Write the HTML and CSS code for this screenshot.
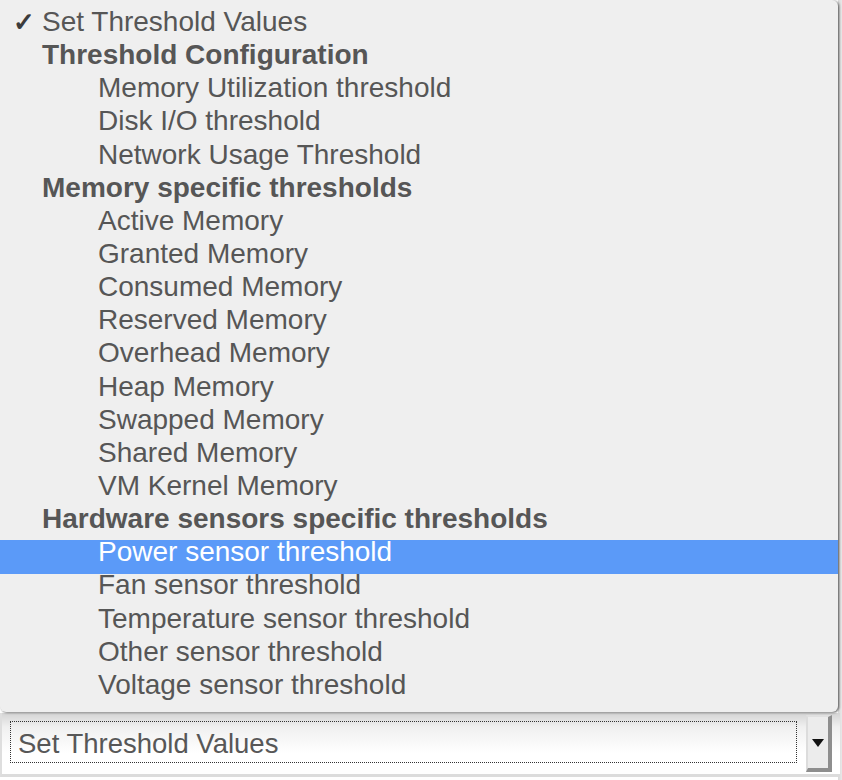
FILE: index.html
```html
<!DOCTYPE html>
<html>
<head>
<meta charset="utf-8">
<link rel="stylesheet" href="styles.css">
</head>
<body>
<div class="page">
  <div class="menu">
    <div class="row check"><span class="mark">✓</span>Set Threshold Values</div>
    <div class="row group">Threshold Configuration</div>
    <div class="row item">Memory Utilization threshold</div>
    <div class="row item">Disk I/O threshold</div>
    <div class="row item">Network Usage Threshold</div>
    <div class="row group">Memory specific thresholds</div>
    <div class="row item">Active Memory</div>
    <div class="row item">Granted Memory</div>
    <div class="row item">Consumed Memory</div>
    <div class="row item">Reserved Memory</div>
    <div class="row item">Overhead Memory</div>
    <div class="row item">Heap Memory</div>
    <div class="row item">Swapped Memory</div>
    <div class="row item">Shared Memory</div>
    <div class="row item">VM Kernel Memory</div>
    <div class="row group">Hardware sensors specific thresholds</div>
    <div class="row item active">Power sensor threshold</div>
    <div class="row item">Fan sensor threshold</div>
    <div class="row item">Temperature sensor threshold</div>
    <div class="row item">Other sensor threshold</div>
    <div class="row item">Voltage sensor threshold</div>
  </div>
  <div class="select">
    <div class="field"><span class="value">Set Threshold Values</span></div>
    <div class="button"><span class="arrow"></span></div>
  </div>
</div>
</body>
</html>
```
FILE: styles.css
```css
html, body {
  margin: 0;
  padding: 0;
  background: #ffffff;
}
.page {
  width: 842px;
  height: 780px;
  position: relative;
  overflow: hidden;
  font-family: "Helvetica Neue", "Liberation Sans", Arial, sans-serif;
  background: linear-gradient(to right, #fff 0, #fff 838px, #d8d8d8 838px, #e8e8e8 842px);
}
.menu {
  position: relative;
  z-index: 2;
  width: 838px;
  height: 712px;
  padding-top: 5px;
  box-sizing: border-box;
  background: #efefef;
  border-radius: 0 6px 6px 6px;
  box-shadow: 1px 1px 2px rgba(0,0,0,0.45), 2px 0 2px rgba(0,0,0,0.15);
  color: #565656;
  font-size: 28px;
}
.row {
  height: 33.15px;
  line-height: 33px;
  white-space: nowrap;
}
.check {
  padding-left: 13px;
}
.mark {
  display: inline-block;
  width: 29px;
  font-size: 26px;
  font-weight: bold;
  color: #3c3c3c;
}
.group {
  padding-left: 42px;
  font-weight: bold;
}
.item {
  padding-left: 98px;
}
.active {
  background: linear-gradient(to bottom, transparent 5px, #5b9af8 5px);
  box-shadow: 0 6px 0 #5b9af8;
  color: #ffffff;
}
.select {
  display: flex;
  height: 64px;
  margin-top: 1px;
  width: 840px;
  border-bottom: 3px solid #dcdcdc;
  border-left: 2px solid #dedede;
  box-sizing: border-box;
  background: linear-gradient(to bottom, #d4d4d4 0, #f0f0f0 14px, #ffffff 40px);
}
.field {
  flex: 1;
  padding: 8px 0 0 8px;
}
.value {
  display: flex;
  align-items: center;
  width: 787px;
  height: 42px;
  box-sizing: border-box;
  border: 1px dotted #333;
  padding: 3px 0 0 7px;
  font-size: 27.5px;
  color: #575757;
}
.button {
  width: 26px;
  margin: 2px 8px 2px 0;
  box-sizing: border-box;
  background: #ececec;
  border-left: 2px solid #dcdcdc;
  border-top: 2px solid #e0e0e0;
  border-right: 4px solid #8e8e8e;
  border-bottom: 4px solid #8e8e8e;
  display: flex;
  align-items: center;
  justify-content: center;
}
.arrow {
  width: 0;
  height: 0;
  border-left: 6px solid transparent;
  border-right: 6px solid transparent;
  border-top: 8px solid #111;
  margin-top: 0;
}
```
